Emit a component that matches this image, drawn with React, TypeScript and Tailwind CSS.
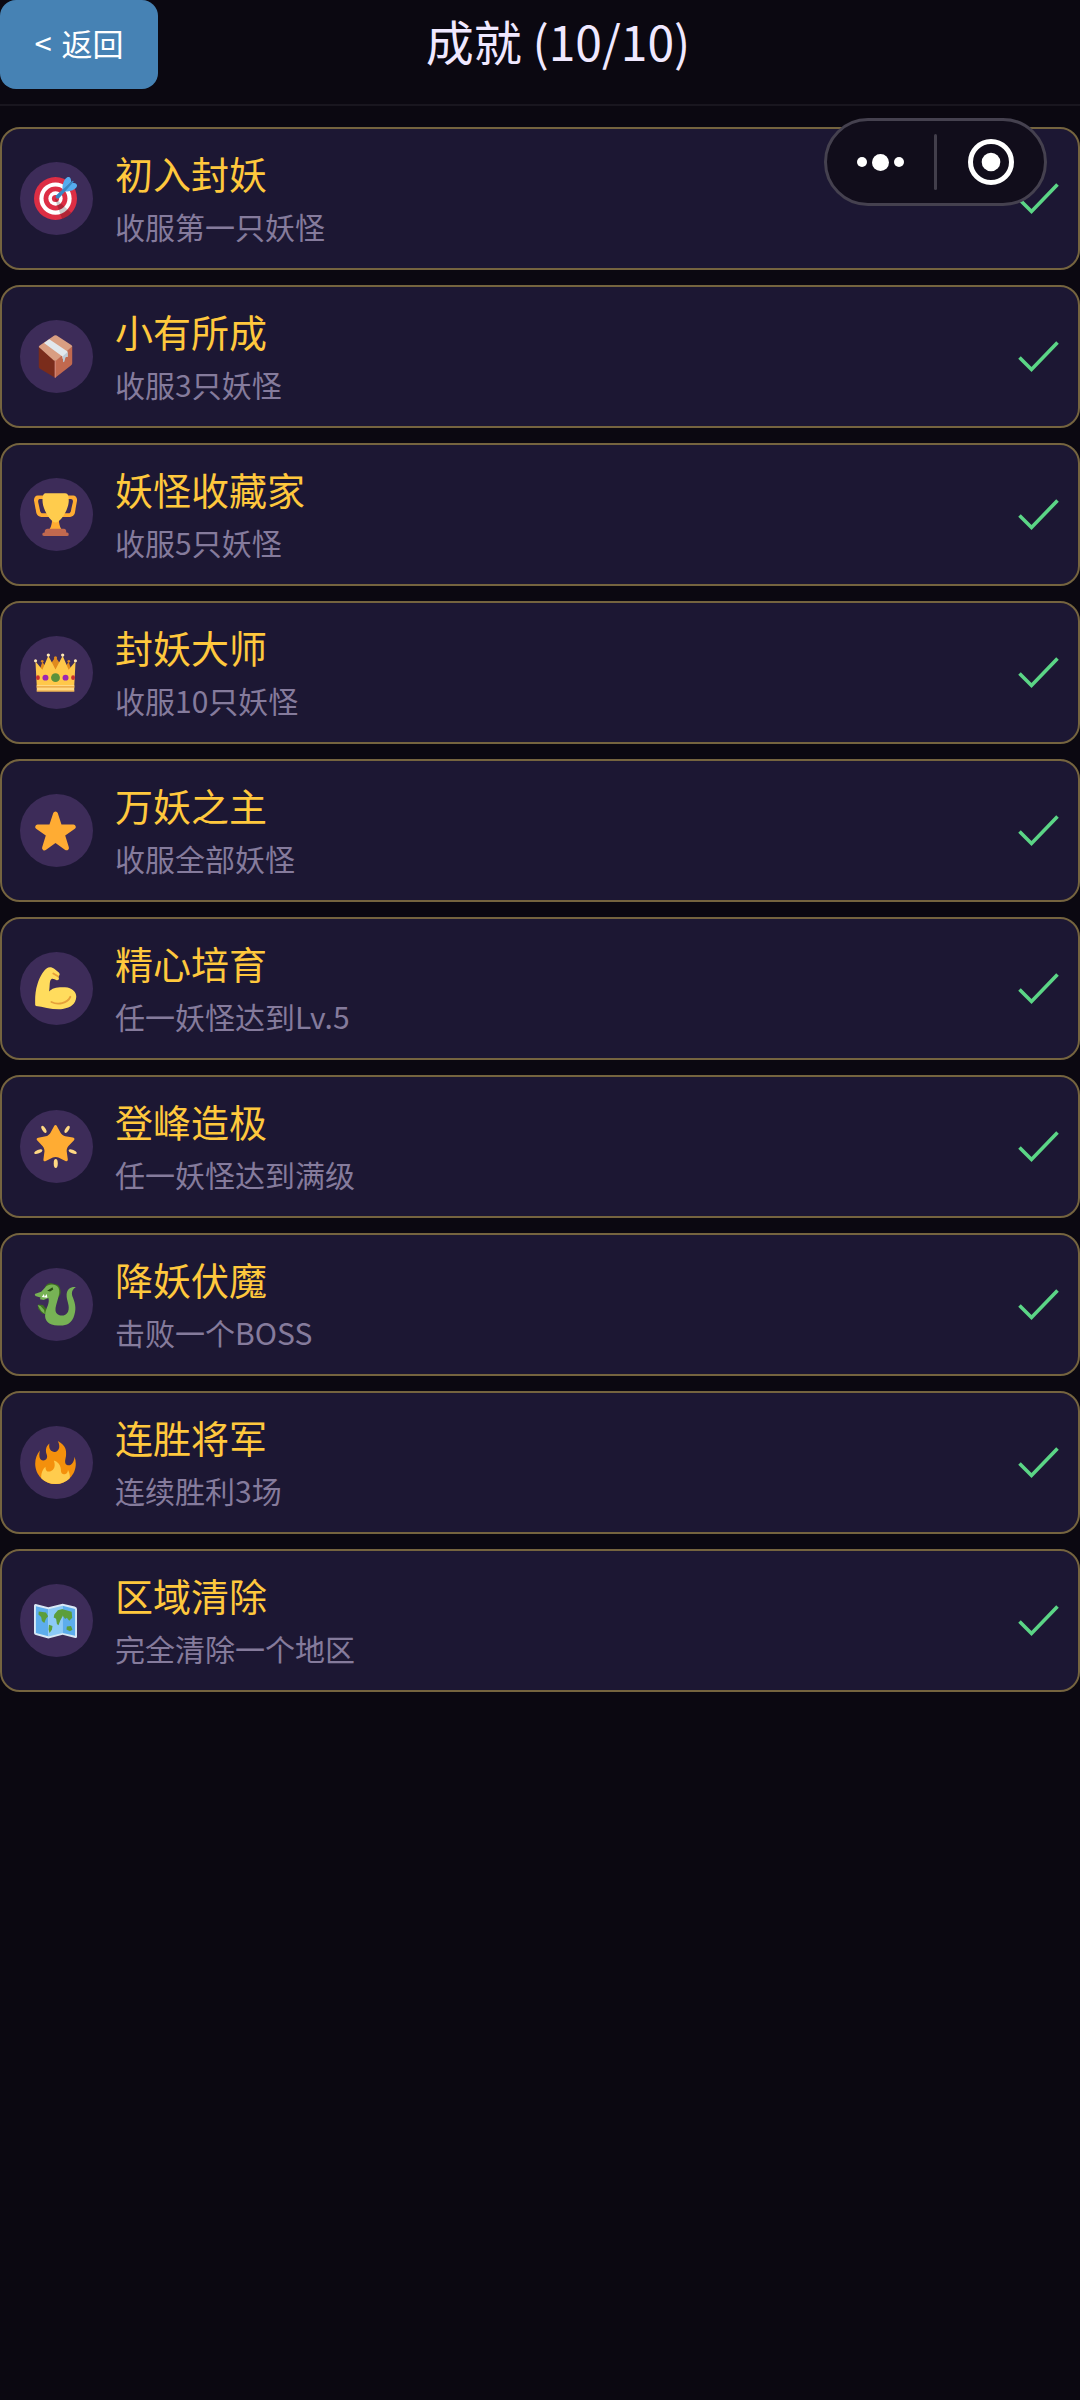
import type { ReactNode } from "react";

interface Achievement {
  name: string;
  desc: string;
  icon: ReactNode;
}

function Emoji({ children }: { children: ReactNode }) {
  return (
    <svg className="h-[43px] w-[43px]" viewBox="0 0 36 36" aria-hidden="true">
      {children}
    </svg>
  );
}

const target = (
  <Emoji>
    <circle fill="#DD2E44" cx="18" cy="18" r="18" />
    <circle fill="#FFF" cx="18" cy="18" r="13.5" />
    <circle fill="#DD2E44" cx="18" cy="18" r="10" />
    <circle fill="#FFF" cx="18" cy="18" r="6" />
    <circle fill="#DD2E44" cx="18" cy="18" r="3" />
    <path opacity=".2" d="M18.24 18.282l13.144 11.754s-2.647 3.376-7.89 5.109L17.579 18.42l.661-.138z" />
    <path
      fill="#55ACEE"
      d="M24.016 6.981c-.403 2.079 0 4.691 0 4.691l7.054-7.388c.291-1.454-.528-3.932-1.718-4.238-1.19-.306-4.079.803-5.336 6.935zm5.003 5.003c-2.079.403-4.691 0-4.691 0l7.388-7.054c1.454-.291 3.932.528 4.238 1.718.306 1.19-.803 4.079-6.935 5.336z"
    />
    <path
      fill="#3A87C2"
      d="M32.798 4.485L21.176 17.587c-.362.362-1.673.882-2.51.046-.836-.836-.419-2.08-.057-2.443L31.815 3.501s.676-.635 1.159-.152-.176 1.136-.176 1.136z"
    />
  </Emoji>
);

const box = (
  <Emoji>
    <path fill="#7A2C1B" d="M4 10l14 11.5V36L5 28.3q-1-.6-1-1.6z" />
    <path fill="#C1694F" d="M32 9.5L17.5 21.5V36l13.4-10.4q1.1-.8 1.1-2z" />
    <path fill="#D99E82" d="M4 10q0-.8.8-1.3L17 .5q1-.6 2 0l12.2 7.8q.8.5.8 1.4L18.6 21.3q-1 .7-2 0z" />
    <path fill="#E6AAAA" opacity=".5" d="M17.2 21.5h1V36l-1-.4z" />
    <path fill="#E1E8ED" d="M8.4 6.6l4.4-3 15.3 10.3v4.6l-1.6-.4-1 2.4-1.7-.8v-1.6z" />
    <path fill="#BCCAD6" d="M24.3 17.6l3.8-3.3v4.2l-1.6-.4-1 4-1.2.8z" />
  </Emoji>
);

const trophy = (
  <Emoji>
    <path
      fill="#FFAC33"
      d="M5.123 5h6C12.227 5 13 4.896 13 6V4c0-1.104-.773-2-1.877-2h-8c-2 0-3.583 2.125-3 5 0 0 1.791 9.375 1.917 9.958C2.373 18.5 4.164 20 6.081 20h6.958c1.105 0-.039-1.896-.039-3v-2c0 1.104-.773 2-1.877 2h-4c-1.104 0-1.833-1.042-2-2S3.539 7.667 3.539 7.667C3.206 5.75 4.018 5 5.123 5zm25.812 0h-6C23.831 5 22 4.896 22 6V4c0-1.104 1.831-2 2.935-2h8c2 0 3.584 2.125 3 5 0 0-1.633 9.419-1.771 10-.354 1.5-2.042 3-4 3h-7.146C21.914 20 22 18.104 22 17v-2c0 1.104 1.831 2 2.935 2h4c1.104 0 1.834-1.042 2-2s1.584-7.333 1.584-7.333C32.851 5.75 32.04 5 30.935 5zM20.832 22c0-6.958-2.709 0-2.709 0s-3-6.958-3 0-3.291 10-3.291 10h12.292c-.001 0-3.292-3.042-3.292-10z"
    />
    <path
      fill="#FFCC4D"
      d="M29.123 6.577c0 6.775-6.77 18.192-11 18.192-4.231 0-11-11.417-11-18.192 0-5.195 1-6.319 3-6.319 1.374 0 6.025-.027 8-.027l7-.001c2.917-.001 4 .684 4 6.347z"
    />
    <path
      fill="#C1694F"
      d="M27 33c0 1.104.227 2-.877 2h-16C9.018 35 9 34.104 9 33v-1c0-1.104 1.164-2 2.206-2h13.917c1.042 0 1.877.896 1.877 2v1z"
    />
    <path
      fill="#C1694F"
      d="M29 34.625c0 .76.165 1.375-1.252 1.375H8.498C7.206 36 7 35.385 7 34.625v-.25C7 33.615 7.738 33 8.498 33h19.25c.759 0 1.252.615 1.252 1.375v.25z"
    />
  </Emoji>
);

const crown = (
  <Emoji>
    <path fill="#E08A1E" d="M4 18L7 9l4 6 7-10 7 10 4-6 3 9z" />
    <path
      fill="#FFC84A"
      d="M2.4 31L1.2 8.6l5.8 7.2L12 4l6 11.4L24 4l5 11.8 5.8-7.2L33.6 31z"
    />
    <path fill="#FFD983" d="M2.3 28.5h31.4V34H2.3z" />
    <path fill="#E9A13B" d="M2.3 29.5h31.4v1H2.3zM2.3 33h31.4v1H2.3z" />
    <g fill="#FFE8B6">
      <circle cx="1.3" cy="8.2" r="1.3" />
      <circle cx="12" cy="3.4" r="1.4" />
      <circle cx="24" cy="3.4" r="1.4" />
      <circle cx="34.7" cy="8.2" r="1.3" />
    </g>
    <circle fill="#E08A1E" cx="6.9" cy="8.6" r="1.1" />
    <circle fill="#E08A1E" cx="18" cy="5.6" r="1.3" />
    <circle fill="#E08A1E" cx="29.1" cy="8.6" r="1.1" />
    <circle fill="#5C913B" cx="18" cy="22.3" r="3.7" />
    <circle fill="#9C27B0" cx="9.6" cy="22.3" r="2.5" />
    <circle fill="#9C27B0" cx="26.4" cy="22.3" r="2.5" />
    <ellipse fill="#C9302F" cx="3.3" cy="22.3" rx="1.6" ry="2" />
    <ellipse fill="#C9302F" cx="32.7" cy="22.3" rx="1.6" ry="2" />
  </Emoji>
);

const star = (
  <Emoji>
    <path
      fill="#FFAC33"
      d="M27.287 34.627c-.404 0-.806-.124-1.152-.371L18 28.422l-8.135 5.834a1.97 1.97 0 0 1-2.312-.008 1.971 1.971 0 0 1-.721-2.194l3.034-9.792-8.062-5.681a1.98 1.98 0 0 1-.708-2.203 1.978 1.978 0 0 1 1.866-1.363L12.947 13l3.179-9.549a1.976 1.976 0 0 1 3.749 0L23 13l10.036.015a1.975 1.975 0 0 1 1.159 3.566l-8.062 5.681 3.034 9.792a1.97 1.97 0 0 1-.72 2.194 1.957 1.957 0 0 1-1.16.379z"
    />
  </Emoji>
);

const muscle = (
  <Emoji>
    <path
      fill="#FFDC5D"
      d="M1 31.8C.8 26 1 20 3 14 4.6 9 7 4 10.5 1.2 12.500-.4 15 0 17.2 1.6L20.8 4.6C22 6 21.5 7 20.3 8.1 21.5 9.5 20.8 11.4 19 11 17.5 10.6 16.5 9.5 15 9.8 12.5 11 13.5 16 12.6 20.6 15 17.5 20 16.6 26 17 32 17.4 35.4 21 35.4 25 35 31 31 34.2 24 35.2 16 36 8 33.4 1.6 32.6z"
    />
    <path
      fill="none"
      stroke="#E5A03A"
      strokeWidth="1.6"
      strokeLinecap="round"
      d="M14.6 29.3C20 32 28 30.5 30.4 25M16.2 5.4L20 7.8"
    />
  </Emoji>
);

const glowingStar = (
  <Emoji>
    <path
      fill="#FFAC33"
      d="M28.84 17.638c-.987 1.044-1.633 3.067-1.438 4.493l.892 6.441c.197 1.427-.701 2.087-1.996 1.469l-5.851-2.796c-1.295-.62-3.408-.611-4.7.018l-5.826 2.842c-1.291.629-2.193-.026-2.007-1.452l.843-6.449c.186-1.427-.475-3.444-1.47-4.481l-4.494-4.688c-.996-1.037-.655-2.102.755-2.365l6.37-1.188c1.41-.263 3.116-1.518 3.793-2.789L16.762.956c.675-1.271 1.789-1.274 2.473-.009L22.33 6.66c.686 1.265 2.4 2.507 3.814 2.758l6.378 1.141c1.412.252 1.761 1.314.774 2.359l-4.456 4.72z"
    />
    <g fill="#FFD983">
      <ellipse cx="8.3" cy="3.7" rx="1.5" ry="3.3" transform="rotate(-32 8.3 3.7)" />
      <ellipse cx="27.7" cy="3.7" rx="1.5" ry="3.3" transform="rotate(32 27.7 3.7)" />
      <ellipse cx="3.6" cy="22.3" rx="1.5" ry="3.6" transform="rotate(68 3.6 22.3)" />
      <ellipse cx="32.4" cy="22.3" rx="1.5" ry="3.6" transform="rotate(-68 32.4 22.3)" />
      <ellipse cx="18.2" cy="32.2" rx="1.7" ry="3.7" />
    </g>
  </Emoji>
);

const dragon = (
  <Emoji>
    <path fill="#3E721D" d="M9 4Q10 .6 14 0l6 1.600q3 3 2 8l-3 4-6-8z" />
    <path fill="#3E721D" d="M3.5 18l4 .5 3.5 4 1 4-5-1-3.500-4z" />
    <path
      fill="#77B255"
      d="M.6 9.2L6 7.4 9.5 3.6C12 .6 18 .4 20.5 4 23 9 17.5 18 18 23 18.6 28 26 29 28.5 24 30.5 19 27 15 27.3 9.5 27.8 5 31 3 35 3.5 31.2 6 31.3 8.5 32.5 12 35 18 35.6 23 33 29 30 35 26 35.6 20 35.6 12 35.6 8.5 31 9.4 25.5 10 21 13.5 17 12 12.6L8 14.2 5 13.6 5.5 12.2 1.2 10.8z"
    />
    <path fill="#77B255" d="M3 18.5l2.5.8 3 3.2.5 3.5-3-2.5z" />
    <path fill="#FFF" d="M6.5 11.8l1.8-2.5.6 2.3 1.8-2.4.5 3.2z" />
    <path fill="#294D14" d="M11 6.5l4.5-3 .6 2-2.6 1.7z" />
  </Emoji>
);

const fire = (
  <Emoji>
    <path
      fill="#F4900C"
      d="M35 19c0-2.062-.367-4.039-1.04-5.868-.46 5.389-3.333 8.157-6.335 6.868-2.812-1.208-.917-5.917-.777-8.164.236-3.809-.012-8.169-6.931-11.794 2.875 5.5.333 8.917-2.333 9.125-2.958.231-5.667-2.542-4.667-7.042-3.238 2.386-3.332 6.402-2.333 9 1.042 2.708-.042 4.958-2.583 5.208-2.84.28-4.418-3.041-2.963-8.333C2.52 10.965 1 14.805 1 19c0 9.389 7.611 17 17 17s17-7.611 17-17z"
    />
    <path
      fill="#FFCC4D"
      d="M28.394 23.999c.148 3.084-2.561 4.293-4.019 3.709-2.106-.843-1.541-2.291-2.083-5.291s-2.625-5.083-5.708-6c2.25 6.333-1.247 8.667-3.08 9.084-1.872.426-3.753-.001-3.968-4.007C7.352 23.668 6 26.676 6 30c0 .368.023.73.055 1.09C9.125 34.124 13.342 36 18 36s8.875-1.876 11.945-4.91c.032-.36.055-.722.055-1.09 0-2.187-.584-4.236-1.606-6.001z"
    />
  </Emoji>
);

const worldMap = (
  <Emoji>
    <path
      fill="#D8E8F5"
      d="M0 5.5Q0 4 1.5 4.2L12 7 24 4l10 2.3q2 .5 2 2V31.5q0 1.4-1.6 1.1L24 30l-12 3L1.5 30.2Q0 29.7 0 28.5z"
    />
    <path fill="#5DADEC" d="M1.6 6L12 8.6v22.6L1.6 28.5z" />
    <path fill="#8CCAF7" d="M12 8.6l12-3v22.8l-12 2.9z" />
    <path fill="#5DADEC" d="M24 5.6l10.4 2.8v22.3L24 28.4z" />
    <path
      fill="#5C9E3A"
      d="M4 10.5l6 .8 1.8 3.2-1.8 2-1.4 3.5-2-1.5-.6-3.5-2.3-2zM12.5 21.5l3 1.2-.5 3-2 2.8-.8-3zM17 13l3-3.5 4-1.2v6.2l-2 3.5-1.5 4-1.3-1-.7-4.5-2-1zM24 8.6l7.5 2 .5 5-2.5 2.6-2-2.4-1.5 1-2-3zM27.5 23l3.5-.4 1.2 3.2-2.2 1.2-2.8-1.5z"
    />
  </Emoji>
);

const achievements: Achievement[] = [
  { name: "初入封妖", desc: "收服第一只妖怪", icon: target },
  { name: "小有所成", desc: "收服3只妖怪", icon: box },
  { name: "妖怪收藏家", desc: "收服5只妖怪", icon: trophy },
  { name: "封妖大师", desc: "收服10只妖怪", icon: crown },
  { name: "万妖之主", desc: "收服全部妖怪", icon: star },
  { name: "精心培育", desc: "任一妖怪达到Lv.5", icon: muscle },
  { name: "登峰造极", desc: "任一妖怪达到满级", icon: glowingStar },
  { name: "降妖伏魔", desc: "击败一个BOSS", icon: dragon },
  { name: "连胜将军", desc: "连续胜利3场", icon: fire },
  { name: "区域清除", desc: "完全清除一个地区", icon: worldMap },
];

function AchievementCard({ name, desc, icon }: Achievement) {
  return (
    <li className="flex items-center gap-[22px] rounded-[20px] border-2 border-[#75643f] bg-[#1c1733] px-[18px] py-[19px]">
      <div className="flex h-[73px] w-[73px] shrink-0 items-center justify-center rounded-full bg-[#3d2c59] pr-0.5">
        {icon}
      </div>
      <div className="flex flex-1 flex-col gap-2 pb-0.5">
        <h2 className="text-[38px] leading-[50px] text-[#ffc83d]">{name}</h2>
        <p className="text-[30px] leading-[41px] text-[#857b9c]">{desc}</p>
      </div>
      <svg className="h-8 w-[42px] shrink-0" viewBox="0 0 42 32" aria-hidden="true">
        <path d="M1.5 16.500L13.500 28.500L39.500 1.500" fill="none" stroke="#5bd586" strokeWidth="3.6" />
      </svg>
    </li>
  );
}

// Host app controls floating over the page
function Capsule() {
  return (
    <div className="absolute top-[118px] right-[33px] flex h-[88px] w-[223px] items-center rounded-full border-3 border-[#45414f] bg-[#110d1b]">
      <button type="button" aria-label="更多" className="flex flex-1 items-center justify-center gap-[5px]">
        <span className="h-[10px] w-[10px] rounded-full bg-white" />
        <span className="h-[17px] w-[17px] rounded-full bg-white" />
        <span className="h-[10px] w-[10px] rounded-full bg-white" />
      </button>
      <span className="h-14 w-[3px] rounded-full bg-[#423e4b]" />
      <button type="button" aria-label="关闭" className="flex flex-1 items-center justify-center">
        <svg className="h-[46px] w-[46px]" viewBox="0 0 46 46" aria-hidden="true">
          <circle cx="23" cy="23" r="20.5" fill="none" stroke="#fff" strokeWidth="5" />
          <circle cx="23" cy="23" r="9.3" fill="#fff" />
        </svg>
      </button>
    </div>
  );
}

export default function App() {
  return (
    <div className="relative min-h-screen bg-[#0b0811] font-['Noto_Sans_CJK_SC',sans-serif]">
      <header className="flex items-start justify-between border-b-2 border-[#19161f] pb-[15px]">
        <button
          type="button"
          className="flex h-[89px] w-[158px] items-center justify-center gap-2.5 rounded-2xl bg-[#4682b4] pb-0.5 text-[31px] text-white"
        >
          <span>&lt;</span>
          <span>返回</span>
        </button>
        <h1 className="pt-2 text-[48px] leading-[64px] text-[#f0e8ff]">成就 (10/10)</h1>
        <div className="w-[122px]" />
      </header>
      <main className="pt-[21px]">
        <ul className="flex flex-col gap-[15px]">
          {achievements.map((item) => (
            <AchievementCard key={item.name} {...item} />
          ))}
        </ul>
      </main>
      <Capsule />
    </div>
  );
}
